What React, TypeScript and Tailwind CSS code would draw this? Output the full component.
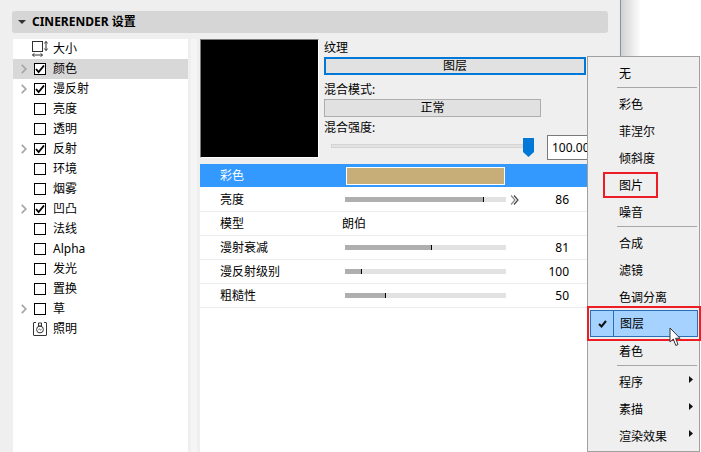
import React from "react";

function Check({ on }: { on: boolean }) {
  return (
    <div className="w-[12px] h-[12px] border border-black bg-white flex items-center justify-center shrink-0">
      {on && (
        <svg width="10" height="10" viewBox="0 0 10 10">
          <path d="M1 5 L3.6 8 L9 1.5" fill="none" stroke="#000" strokeWidth="1.9" />
        </svg>
      )}
    </div>
  );
}

const listRows: { t: string; arrow?: boolean; check?: boolean; icon?: string; sel?: boolean }[] = [
  { t: "大小", icon: "size" },
  { t: "颜色", arrow: true, check: true, sel: true },
  { t: "漫反射", arrow: true, check: true },
  { t: "亮度", check: false },
  { t: "透明", check: false },
  { t: "反射", arrow: true, check: true },
  { t: "环境", check: false },
  { t: "烟雾", check: false },
  { t: "凹凸", arrow: true, check: true },
  { t: "法线", check: false },
  { t: "Alpha", check: false },
  { t: "发光", check: false },
  { t: "置换", check: false },
  { t: "草", arrow: true, check: false },
  { t: "照明", icon: "light" },
];

function SizeIcon() {
  return (
    <svg width="16" height="16" viewBox="0 0 16 16" className="shrink-0">
      <rect x="0.5" y="0.5" width="10" height="10" fill="none" stroke="#333" />
      <path d="M14 0.5 V9.5 M12.3 2.5 L14 0.5 L15.7 2.5 M12.3 7.5 L14 9.5 L15.7 7.5" fill="none" stroke="#333" />
      <path d="M0.5 14 H10.5 M2.5 12.3 L0.5 14 L2.5 15.7 M8.5 12.3 L10.5 14 L8.5 15.7" fill="none" stroke="#333" />
    </svg>
  );
}

function LightIcon() {
  return (
    <svg width="14" height="14" viewBox="0 0 14 14" className="shrink-0">
      <path d="M3 0.5 H1 Q0.5 0.5 0.5 1 V13 Q0.5 13.5 1 13.5 H13 Q13.5 13.5 13.5 13 V1 Q13.5 0.5 13 0.5 H11" fill="none" stroke="#333" />
      <circle cx="7" cy="7.5" r="3.4" fill="none" stroke="#333" />
      <path d="M5.5 1 H8.5 V4 H5.5 Z" fill="none" stroke="#333" />
      <path d="M5.5 7.5 Q6.2 6.5 7 7.5 T8.5 7.5" fill="none" stroke="#333" strokeWidth="0.8" />
    </svg>
  );
}

function ListRow({ r }: { r: (typeof listRows)[number] }) {
  return (
    <div className={`h-[20px] flex items-center ${r.sel ? "bg-[#d8d8d8]" : ""}`}>
      <div className="w-[21px] flex pl-[8px] shrink-0">
        {r.arrow && (
          <svg width="6" height="10" viewBox="0 0 6 10">
            <path d="M0.8 0.8 L4.8 5 L0.8 9.2" fill="none" stroke="#a8a8a8" strokeWidth="1.8" />
          </svg>
        )}
      </div>
      <div className="w-[12px] flex justify-center shrink-0">
        {r.icon === "size" && <SizeIcon />}
        {r.icon === "light" && <LightIcon />}
        {r.check !== undefined && <Check on={r.check} />}
      </div>
      <span className="ml-[7px] text-[12px] text-black">{r.t}</span>
    </div>
  );
}

function Slider({ fill, value, more }: { fill: number; value: string; more?: boolean }) {
  return (
    <>
      <div className="ml-[42px] w-[161px] h-[5px] bg-[#e2e2e2] flex">
        <div className="h-full bg-[#afafaf] border-r border-black" style={{ width: fill }} />
      </div>
      <div className="w-[20px] pl-[4px] flex items-center">
        {more && (
          <svg width="9" height="10" viewBox="0 0 9 10">
            <path d="M1 0.5 L5 5 L1 9.5" fill="none" stroke="#8a8a8a" strokeWidth="1.2" />
            <path d="M4 0.5 L8 5 L4 9.5" fill="none" stroke="#444" strokeWidth="1.2" />
          </svg>
        )}
      </div>
      <span className="w-[43px] text-right text-[12px] text-black">{value}</span>
    </>
  );
}

function PropRow({ label, children }: { label: string; children: React.ReactNode }) {
  return (
    <div className="h-[24px] flex items-center border-b border-[#ececec]">
      <span className="w-[103px] pl-[20px] text-[12px] text-black shrink-0">{label}</span>
      {children}
    </div>
  );
}

function MenuItem({ t, sub }: { t: string; sub?: boolean }) {
  return (
    <div className="h-[27px] flex items-center pl-[31px] relative text-[12px] text-black">
      {t}
      {sub && (
        <svg width="4" height="7" viewBox="0 0 4 7" className="absolute right-[6px] top-[7px]">
          <path d="M0 0 L4 3.5 L0 7 Z" fill="#111" />
        </svg>
      )}
    </div>
  );
}

function Sep() {
  return <div className="h-[1px] bg-[#a6a6a6] ml-[29px] mr-[2px] mb-[3px]" />;
}

export default function App() {
  return (
    <div
      className="relative w-[701px] h-[452px] overflow-hidden bg-white flex"
      style={{ fontFamily: '"Noto Sans", "Noto Sans CJK SC", sans-serif' }}
    >
      {/* main window */}
      <div className="w-[621px] h-full bg-[#efefef] border-r border-[#7f93aa] flex flex-col shrink-0">
        <div className="mt-[11px] ml-[12px] mr-[12px] h-[22px] bg-[#d6d6d6] rounded-[3px] flex items-center pl-[6px]">
          <svg width="8" height="4" viewBox="0 0 8 4"><path d="M0 0 H8 L4 4 Z" fill="#333" /></svg>
          <span className="ml-[6px] text-[12px] font-bold text-black">CINERENDER 设置</span>
        </div>
        <div className="mt-[6px] flex flex-1 min-h-0">
          <div className="ml-[13px] w-[175px] bg-white shrink-0">
            {listRows.map((r) => (
              <ListRow key={r.t} r={r} />
            ))}
          </div>
          <div className="ml-[3px] w-[6px] bg-[#f5f5f5] shrink-0" />
          <div className="ml-[3px] w-[387px] shrink-0 flex flex-col">
            {/* top */}
            <div className="flex h-[125px] shrink-0">
              <div className="w-[119px] h-[119px] bg-black border-t border-l border-r border-b border-t-[#7a7a7a] border-l-[#7a7a7a] border-r-white border-b-white shrink-0" />
              <div className="ml-[5px] flex-1 min-w-0">
                <div className="text-[12px] leading-[17px] text-black">纹理</div>
                <div className="mt-[1px] w-[262px] h-[18px] border-2 border-[#0078d7] bg-[#e1e1e1] flex items-center justify-center text-[12px] text-black">
                  图层
                </div>
                <div className="mt-[6px] text-[12px] leading-[17px] text-black">混合模式:</div>
                <div className="mt-[1px] w-[217px] h-[18px] border border-[#adadad] bg-[#e1e1e1] flex items-center justify-center text-[12px] text-black">
                  正常
                </div>
                <div className="mt-[2px] text-[12px] leading-[17px] text-black">混合强度:</div>
                <div className="-mt-[1px] flex items-start h-[25px] overflow-hidden">
                  <div className="mt-[9px] ml-[7px] w-[192px] h-[4px] bg-[#e3e3e3] border border-[#d4d4d4] shrink-0" />
                  <svg width="11" height="19" viewBox="0 0 11 19" className="mt-[3px] shrink-0">
                    <path d="M0 0 H11 V14 L5.5 19 L0 14 Z" fill="#0078d7" />
                  </svg>
                  <div className="ml-[13px] w-[60px] h-[25px] border border-[#7a7a7a] bg-white text-[12px] leading-[23px] pl-[4px] text-black shrink-0">
                    100.00
                  </div>
                </div>
              </div>
            </div>
            {/* props */}
            <div className="flex-1 bg-white">
              <div className="h-[23px] bg-[#3399ff] flex items-center">
                <span className="w-[103px] pl-[20px] text-[12px] text-white shrink-0">彩色</span>
                <div className="ml-[43px] w-[159px] h-[18px] bg-[#c7ae78] border border-white" />
              </div>
              <div className="pt-[1px]">
                <PropRow label="亮度"><Slider fill={139} value="86" more /></PropRow>
                <PropRow label="模型"><span className="ml-[39px] text-[12px] text-black">朗伯</span></PropRow>
                <PropRow label="漫射衰减"><Slider fill={87} value="81" /></PropRow>
                <PropRow label="漫反射级别"><Slider fill={17} value="100" /></PropRow>
                <PropRow label="粗糙性"><Slider fill={41} value="50" /></PropRow>
              </div>
            </div>
          </div>
        </div>
      </div>
      <div className="flex-1 bg-gradient-to-r from-[#d2d2d2] to-white to-[25%]" />

      {/* popup menu */}
      <div className="absolute left-[587px] top-[56px] w-[113px] h-[396px] bg-[#efefef] border border-[#a0a0a0] pt-[3px]">
        <MenuItem t="无" />
        <Sep />
        <MenuItem t="彩色" />
        <MenuItem t="菲涅尔" />
        <MenuItem t="倾斜度" />
        <MenuItem t="图片" />
        <MenuItem t="噪音" />
        <Sep />
        <MenuItem t="合成" />
        <MenuItem t="滤镜" />
        <MenuItem t="色调分离" />
        <div className="h-[27px] -mt-[1px] mb-[1px] ml-[2px] mr-[1px] bg-[#a6d2ff] border border-[#2a6fb5] flex items-center text-[12px] text-black">
          <div className="w-[23px] h-full border-r border-[#2a6fb5] flex items-center justify-center">
            <svg width="9" height="8" viewBox="0 0 9 8"><path d="M1 4 L3.5 6.5 L8 1" fill="none" stroke="#111" strokeWidth="2" /></svg>
          </div>
          <span className="ml-[6px]">图层</span>
        </div>
        <MenuItem t="着色" />
        <Sep />
        <MenuItem t="程序" sub />
        <MenuItem t="素描" sub />
        <MenuItem t="渲染效果" sub />
      </div>

      {/* annotations */}
      <div className="absolute left-[603px] top-[172px] w-[55px] h-[26px] border-2 border-[#ee1c25]" />
      <div className="absolute left-[587px] top-[306px] w-[114px] h-[35px] border-2 border-[#ee1c25]" />

      {/* cursor */}
      <svg width="13" height="20" viewBox="0 0 13 20" className="absolute left-[669px] top-[327px]">
        <path d="M1 1 V15 L4.3 12 L6.8 18.5 L9 17.5 L6.6 11.3 L11 11.3 Z" fill="#fff" stroke="#333" strokeWidth="1" />
      </svg>
    </div>
  );
}
